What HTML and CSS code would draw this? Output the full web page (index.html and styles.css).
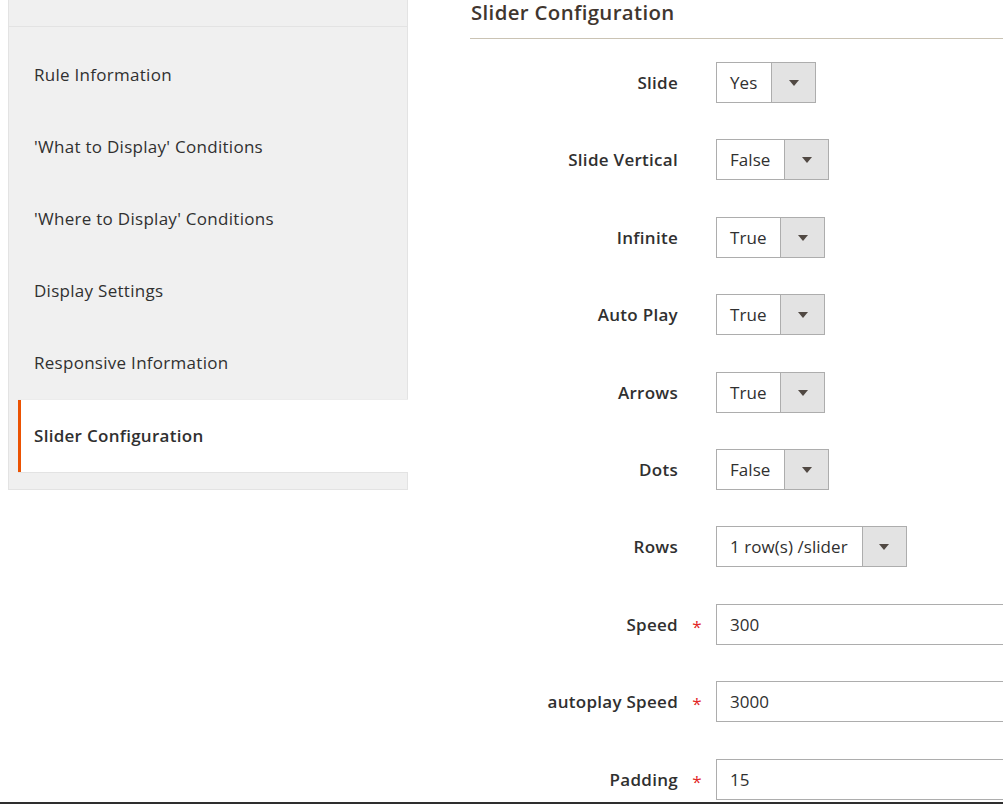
FILE: index.html
```html
<!DOCTYPE html>
<html lang="en">
<head>
<meta charset="utf-8">
<title>Slider Configuration</title>
<link rel="stylesheet" href="styles.css">
</head>
<body>
<div class="page">
  <aside class="nav">
    <div class="nav-top"></div>
    <ul class="nav-list">
      <li class="nav-item">Rule Information</li>
      <li class="nav-item">'What to Display' Conditions</li>
      <li class="nav-item">'Where to Display' Conditions</li>
      <li class="nav-item">Display Settings</li>
      <li class="nav-item">Responsive Information</li>
      <li class="nav-item active">Slider Configuration</li>
    </ul>
  </aside>
  <main class="content">
    <h2 class="section-title">Slider Configuration</h2>
    <div class="form">
      <div class="field">
        <label class="field-label">Slide</label><span class="req"></span>
        <div class="select"><span class="select-value">Yes</span><span class="select-arrow"></span></div>
      </div>
      <div class="field">
        <label class="field-label">Slide Vertical</label><span class="req"></span>
        <div class="select"><span class="select-value">False</span><span class="select-arrow"></span></div>
      </div>
      <div class="field">
        <label class="field-label">Infinite</label><span class="req"></span>
        <div class="select"><span class="select-value">True</span><span class="select-arrow"></span></div>
      </div>
      <div class="field">
        <label class="field-label">Auto Play</label><span class="req"></span>
        <div class="select"><span class="select-value">True</span><span class="select-arrow"></span></div>
      </div>
      <div class="field">
        <label class="field-label">Arrows</label><span class="req"></span>
        <div class="select"><span class="select-value">True</span><span class="select-arrow"></span></div>
      </div>
      <div class="field">
        <label class="field-label">Dots</label><span class="req"></span>
        <div class="select"><span class="select-value">False</span><span class="select-arrow"></span></div>
      </div>
      <div class="field">
        <label class="field-label">Rows</label><span class="req"></span>
        <div class="select"><span class="select-value">1 row(s) /slider</span><span class="select-arrow"></span></div>
      </div>
      <div class="field">
        <label class="field-label">Speed</label><span class="req">*</span>
        <input class="input" type="text" value="300">
      </div>
      <div class="field">
        <label class="field-label">autoplay Speed</label><span class="req">*</span>
        <input class="input" type="text" value="3000">
      </div>
      <div class="field">
        <label class="field-label">Padding</label><span class="req">*</span>
        <input class="input" type="text" value="15">
      </div>
    </div>
  </main>
</div>
<div class="hscroll"></div>
</body>
</html>
```

FILE: styles.css
```css
html, body {
  margin: 0;
  padding: 0;
  overflow: hidden;
  background: #ffffff;
}

body {
  font-family: "Open Sans", "Liberation Sans", sans-serif;
  font-size: 17px;
  letter-spacing: 0.28px;
  color: #303030;
}

.page {
  display: flex;
  align-items: flex-start;
  width: 1400px;
}

/* ---------- Left navigation ---------- */
.nav {
  margin-left: 8px;
  width: 398px;
  flex: none;
  background: #f0f0f0;
  border: 1px solid #e3e3e3;
  border-top: 0;
}

.nav-top {
  height: 26px;
  border-bottom: 1px solid #e3e3e3;
}

.nav-list {
  list-style: none;
  margin: 0;
  padding: 13px 0 17px 9px;
}

.nav-item {
  height: 72px;
  display: flex;
  align-items: center;
  padding-left: 13px;
  border-left: 3px solid transparent;
  color: #303030;
  line-height: 1.2;
  position: relative;
  top: -1px;
}

.nav-item.active {
  top: 0;
  background: #ffffff;
  border-left-color: #eb5202;
  font-weight: 600;
  margin-right: -1px;
  box-shadow: 0 1px 0 #e3e3e3, 0 -1px 0 #ececec;
}

/* ---------- Content ---------- */
.content {
  margin-left: 62px;
  flex: 1;
}

.section-title {
  margin: 0;
  padding: 0 0 13px 1px;
  font-size: 20.4px;
  line-height: 25px;
  letter-spacing: 0.35px;
  font-weight: 600;
  color: #41362f;
  border-bottom: 1px solid #cac3b4;
}

.form {
  padding-top: 23px;
  display: flex;
  flex-direction: column;
  gap: 36.4px;
}

.field {
  display: flex;
  align-items: center;
  height: 41px;
}

.field-label {
  width: 208px;
  flex: none;
  text-align: right;
  font-weight: 600;
  color: #303030;
}

.req {
  width: 38px;
  flex: none;
  text-align: center;
  color: #e22626;
  font-size: 17px;
  position: relative;
  top: 2px;
}

.select {
  display: inline-flex;
  height: 41px;
  box-sizing: border-box;
  border: 1px solid #adadad;
  background: #ffffff;
}

.select-value {
  display: flex;
  align-items: center;
  padding: 0 14px 0 13px;
  color: #303030;
  white-space: nowrap;
  letter-spacing: 0.05px;
}

.select-arrow {
  width: 43px;
  background: #e3e3e3;
  border-left: 1px solid #adadad;
  display: flex;
  align-items: center;
  justify-content: center;
}

.select-arrow::after {
  content: "";
  width: 0;
  height: 0;
  border-left: 5px solid transparent;
  border-right: 5px solid transparent;
  border-top: 6px solid #514943;
  margin-top: 1px;
}

.input {
  width: 420px;
  height: 41px;
  box-sizing: border-box;
  border: 1px solid #adadad;
  padding: 0 13px;
  font-family: inherit;
  font-size: 17px;
  letter-spacing: 0.05px;
  color: #303030;
  background: #ffffff;
  outline: none;
}

.hscroll {
  position: fixed;
  left: 0;
  right: 0;
  bottom: 0;
  height: 2px;
  background: #2e2e2e;
}
```
